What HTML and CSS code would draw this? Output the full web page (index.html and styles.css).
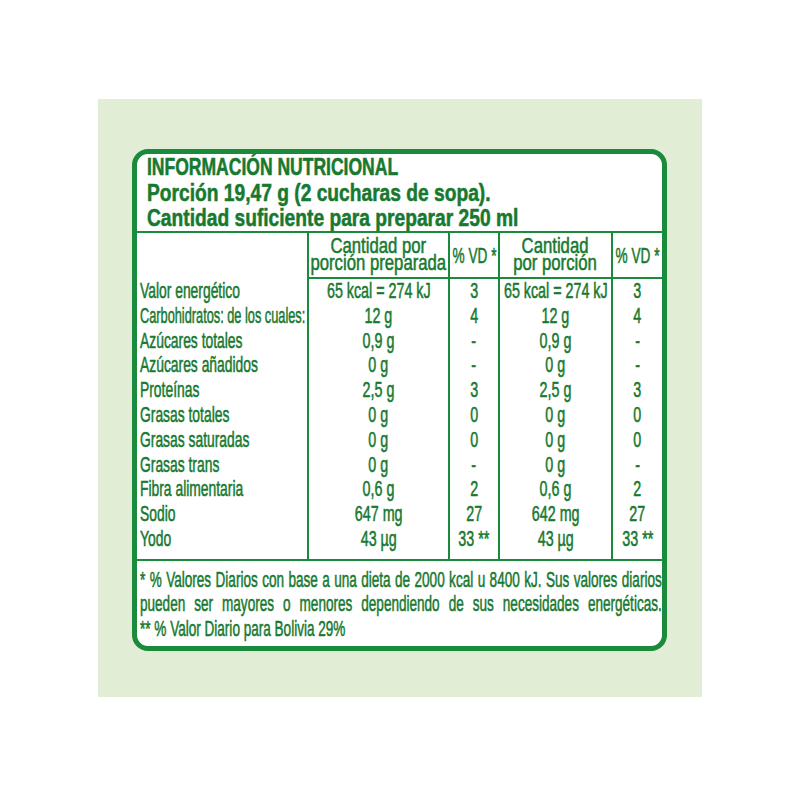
FILE: index.html
```html
<!DOCTYPE html>
<html lang="es">
<head>
<meta charset="utf-8">
<title>Información nutricional</title>
<link rel="stylesheet" href="styles.css">
</head>
<body>
<div class="frame">
  <div class="panel">
    <div class="head">
      <div class="hl"><span class="t h1">INFORMACIÓN NUTRICIONAL</span></div>
      <div class="hl"><span class="t h2">Porción 19,47 g (2 cucharas de sopa).</span></div>
      <div class="hl"><span class="t h2">Cantidad suficiente para preparar 250 ml</span></div>
    </div>
    <div class="table">
      <div class="hc"></div>
      <div class="hc v"><span class="t wide">Cantidad por<br>porción preparada</span></div>
      <div class="hc v mid"><span class="t vd">% VD *</span></div>
      <div class="hc v"><span class="t wide">Cantidad<br>por porción</span></div>
      <div class="hc v mid"><span class="t vd">% VD *</span></div>

      <div class="c l"><span class="t lab">Valor energético</span></div>
      <div class="c v"><span class="t num">65 kcal = 274 kJ</span></div>
      <div class="c v"><span class="t num">3</span></div>
      <div class="c v"><span class="t num">65 kcal = 274 kJ</span></div>
      <div class="c v"><span class="t num">3</span></div>

      <div class="c l"><span class="t lab tight">Carbohidratos: de los cuales:</span></div>
      <div class="c v"><span class="t num">12 g</span></div>
      <div class="c v"><span class="t num">4</span></div>
      <div class="c v"><span class="t num">12 g</span></div>
      <div class="c v"><span class="t num">4</span></div>

      <div class="c l"><span class="t lab">Azúcares totales</span></div>
      <div class="c v"><span class="t num">0,9 g</span></div>
      <div class="c v"><span class="t num">-</span></div>
      <div class="c v"><span class="t num">0,9 g</span></div>
      <div class="c v"><span class="t num">-</span></div>

      <div class="c l"><span class="t lab">Azúcares añadidos</span></div>
      <div class="c v"><span class="t num">0 g</span></div>
      <div class="c v"><span class="t num">-</span></div>
      <div class="c v"><span class="t num">0 g</span></div>
      <div class="c v"><span class="t num">-</span></div>

      <div class="c l"><span class="t lab">Proteínas</span></div>
      <div class="c v"><span class="t num">2,5 g</span></div>
      <div class="c v"><span class="t num">3</span></div>
      <div class="c v"><span class="t num">2,5 g</span></div>
      <div class="c v"><span class="t num">3</span></div>

      <div class="c l"><span class="t lab">Grasas totales</span></div>
      <div class="c v"><span class="t num">0 g</span></div>
      <div class="c v"><span class="t num">0</span></div>
      <div class="c v"><span class="t num">0 g</span></div>
      <div class="c v"><span class="t num">0</span></div>

      <div class="c l"><span class="t lab">Grasas saturadas</span></div>
      <div class="c v"><span class="t num">0 g</span></div>
      <div class="c v"><span class="t num">0</span></div>
      <div class="c v"><span class="t num">0 g</span></div>
      <div class="c v"><span class="t num">0</span></div>

      <div class="c l"><span class="t lab">Grasas trans</span></div>
      <div class="c v"><span class="t num">0 g</span></div>
      <div class="c v"><span class="t num">-</span></div>
      <div class="c v"><span class="t num">0 g</span></div>
      <div class="c v"><span class="t num">-</span></div>

      <div class="c l"><span class="t lab">Fibra alimentaria</span></div>
      <div class="c v"><span class="t num">0,6 g</span></div>
      <div class="c v"><span class="t num">2</span></div>
      <div class="c v"><span class="t num">0,6 g</span></div>
      <div class="c v"><span class="t num">2</span></div>

      <div class="c l"><span class="t lab">Sodio</span></div>
      <div class="c v"><span class="t num">647 mg</span></div>
      <div class="c v"><span class="t num">27</span></div>
      <div class="c v"><span class="t num">642 mg</span></div>
      <div class="c v"><span class="t num">27</span></div>

      <div class="c l last"><span class="t lab">Yodo</span></div>
      <div class="c v last"><span class="t num">43 µg</span></div>
      <div class="c v last"><span class="t num">33 **</span></div>
      <div class="c v last"><span class="t num">43 µg</span></div>
      <div class="c v last"><span class="t num">33 **</span></div>
    </div>
    <div class="foot">
      <div class="note">* % Valores Diarios con base a una dieta de 2000 kcal u 8400 kJ. Sus valores diarios<br>pueden ser mayores o menores dependiendo de sus necesidades energéticas.</div>
      <div class="note left">** % Valor Diario para Bolivia 29%</div>
    </div>
  </div>
</div>
</body>
</html>
```

FILE: styles.css
```css
:root {
  --line: #1a8a3c;
  --ink: #17792f;
}

html, body {
  margin: 0;
  padding: 0;
  background: #ffffff;
}

body {
  font-family: "Liberation Sans", Arial, sans-serif;
  color: var(--ink);
}

.frame {
  width: 604px;
  height: 598px;
  margin: 99px 0 0 98px;
  padding: 50px 0 0 34px;
  box-sizing: border-box;
  background: #e1edd4;
}

.panel {
  width: 535px;
  height: 502px;
  box-sizing: border-box;
  border: 5px solid var(--line);
  border-radius: 16px;
  background: #ffffff;
  overflow: hidden;
}

.t {
  display: inline-block;
  white-space: nowrap;
  flex-shrink: 0;
  -webkit-text-stroke: 0.55px var(--ink);
}

/* title block */
.head {
  height: 77px;
  padding-left: 10px;
  border-bottom: 2px solid var(--line);
}

.hl {
  font-size: 24px;
  font-weight: bold;
  line-height: 26px;
  height: 25.7px;
}

.h1 {
  transform: scaleX(0.73);
  transform-origin: left center;
}

.h2 {
  transform: scaleX(0.8);
  transform-origin: left center;
}

/* table */
.table {
  display: grid;
  grid-template-columns: 170px 141px 50px 113px 51px;
  font-size: 22px;
}

.v {
  border-left: 2px solid var(--line);
}

.hc {
  height: 46px;
  box-sizing: border-box;
  display: flex;
  justify-content: center;
  align-items: flex-start;
  padding-top: 4px;
  line-height: 17px;
  text-align: center;
}

.hc.v {
  border-bottom: 2px solid var(--line);
}

.hc.mid {
  align-items: center;
  padding-top: 0;
}

.wide {
  transform: scaleX(0.76);
  transform-origin: center center;
}

.vd {
  transform: scaleX(0.62);
  transform-origin: center center;
}

.c {
  height: 24.8px;
  line-height: 24.8px;
  display: flex;
  justify-content: center;
}

.c.l {
  justify-content: flex-start;
  padding-left: 3px;
}

.c.last {
  height: 31.8px;
}

.lab {
  transform: scaleX(0.63);
  transform-origin: left center;
}

.lab.tight {
  transform: scaleX(0.58);
}

.num {
  transform: scaleX(0.65);
  transform-origin: center center;
}

/* footnote */
.foot {
  border-top: 2px solid var(--line);
  padding: 7px 0 0 3px;
  font-size: 22px;
  line-height: 24.5px;
}

.note {
  width: 847px;
  text-align: justify;
  text-align-last: justify;
  transform: scaleX(0.616);
  transform-origin: left top;
  -webkit-text-stroke: 0.55px var(--ink);
}

.note.left {
  text-align: left;
  text-align-last: left;
}
```
